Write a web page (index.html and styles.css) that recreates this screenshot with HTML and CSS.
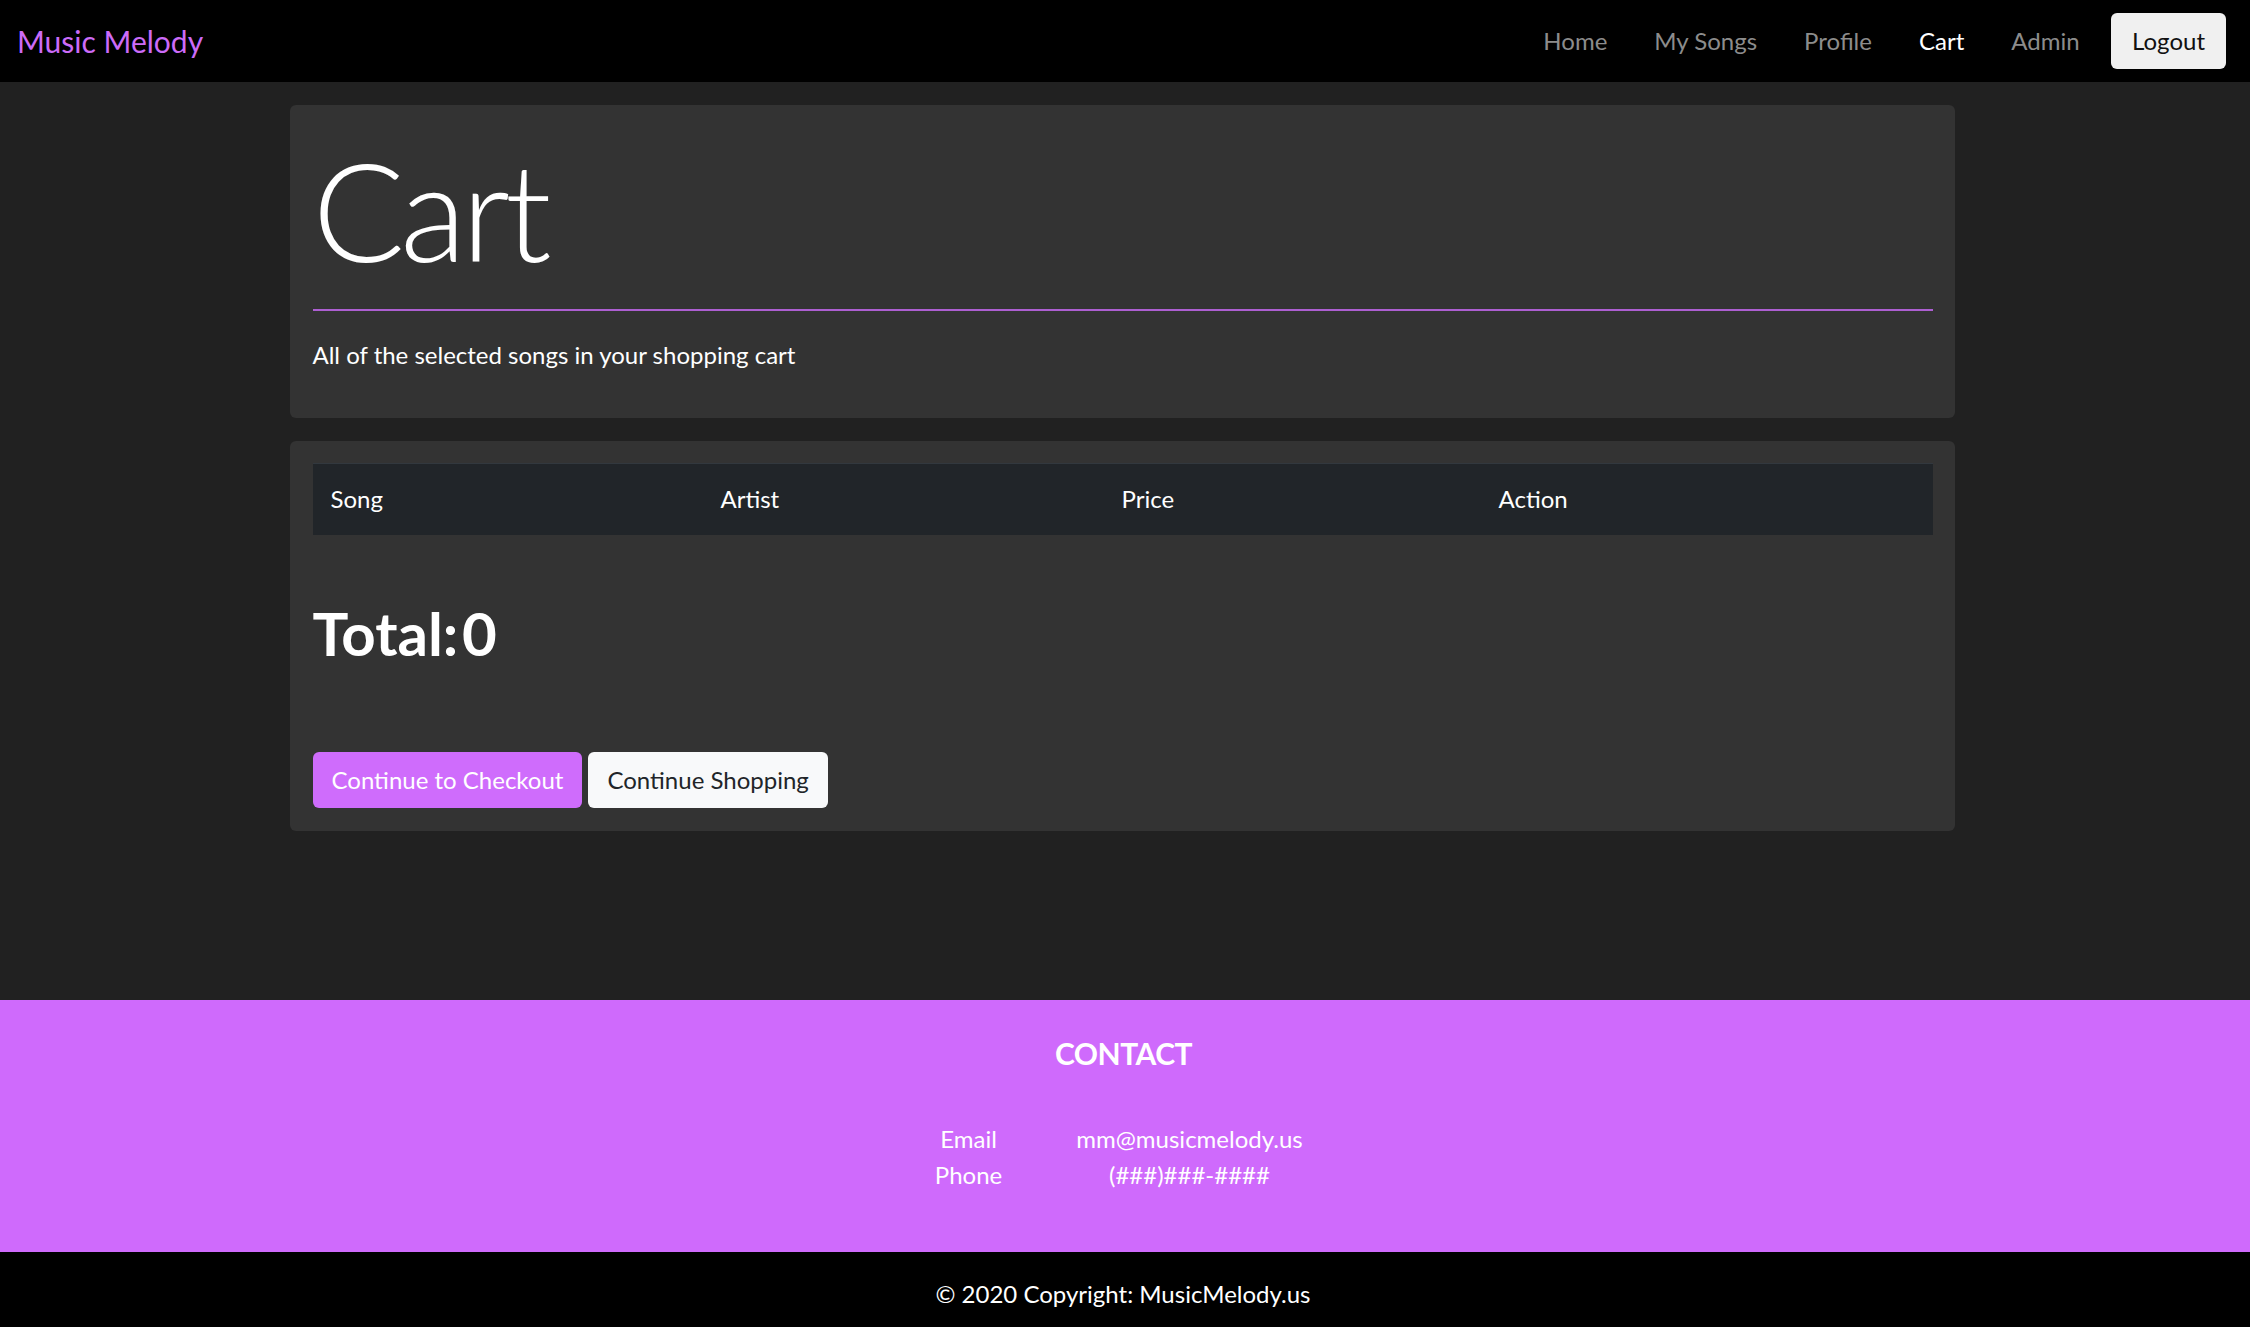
FILE: index.html
```html
<!DOCTYPE html>
<html lang="en">
<head>
<meta charset="utf-8">
<title>Cart - Music Melody</title>
<link rel="stylesheet" href="styles.css">
</head>
<body>
<nav class="navbar">
  <a class="brand" href="#">Music Melody</a>
  <ul class="nav">
    <li><a class="nav-link" href="#">Home</a></li>
    <li><a class="nav-link" href="#">My Songs</a></li>
    <li><a class="nav-link" href="#">Profile</a></li>
    <li><a class="nav-link active" href="#">Cart</a></li>
    <li><a class="nav-link" href="#">Admin</a></li>
  </ul>
  <button class="btn btn-logout">Logout</button>
</nav>

<main class="container">
  <section class="card jumbo">
    <h1 class="display">Cart</h1>
    <hr class="divider">
    <p class="subtitle">All of the selected songs in your shopping cart</p>
  </section>

  <section class="card cart">
    <table class="cart-table">
      <colgroup>
        <col class="c-song">
        <col class="c-artist">
        <col class="c-price">
        <col class="c-action">
      </colgroup>
      <thead>
        <tr><th>Song</th><th>Artist</th><th>Price</th><th>Action</th></tr>
      </thead>
      <tbody></tbody>
    </table>
    <h1 class="total">Total:&#8202;0</h1>
    <div class="actions">
      <button class="btn btn-purple">Continue to Checkout</button>
      <button class="btn btn-light">Continue Shopping</button>
    </div>
  </section>
</main>

<footer class="footer">
  <div class="contact">
    <h5 class="contact-title">CONTACT</h5>
    <div class="contact-grid">
      <span>Email</span><span>mm@musicmelody.us</span>
      <span>Phone</span><span>(###)###-####</span>
    </div>
  </div>
  <div class="copyright">© 2020 Copyright: MusicMelody.us</div>
</footer>
</body>
</html>
```

FILE: styles.css
```css
* { box-sizing: border-box; }

html, body { height: 100%; }

body {
  margin: 0;
  min-height: 100vh;
  display: flex;
  flex-direction: column;
  background: #212121;
  color: #ffffff;
  font-family: "Lato", "Open Sans", sans-serif;
  font-size: 24px;
  line-height: 1.5;
}

a { text-decoration: none; }

/* Navbar */
.navbar {
  height: 82px;
  flex: 0 0 82px;
  background: #000;
  display: flex;
  align-items: center;
  padding: 0 24px 0 17px;
}

.brand {
  color: #cc6bf8;
  font-size: 30px;
  line-height: 45px;
}

.nav {
  list-style: none;
  margin: 0 0 0 auto;
  padding: 0;
  display: flex;
  align-items: center;
}

.nav-link {
  display: block;
  padding: 0 23.5px;
  color: #8c8c8c;
  font-size: 24px;
  line-height: 36px;
}

.nav-link.active { color: #ffffff; }

.btn {
  font-family: inherit;
  font-size: 24px;
  line-height: 36px;
  padding: 9px 18px;
  border: 1.5px solid transparent;
  border-radius: 6px;
  cursor: pointer;
}

.btn-logout {
  margin-left: 8px;
  padding: 9px 20px;
  background: #f0f0f0;
  color: #111;
}

/* Main */
.container {
  flex: 1 0 auto;
  width: 1665px;
  margin: 0 0 0 calc(50% - 835px);
  padding-top: 23px;
}

.card {
  background: #333333;
  border-radius: 6px;
  padding: 22.5px;
}

.jumbo { padding-bottom: 22px; }

.display {
  margin: -4px 0 0;
  font-size: 137px;
  font-weight: 300;
  line-height: 170px;
  letter-spacing: -5px;
  color: #fff;
}

.divider {
  margin: 15px 0 0;
  border: 0;
  height: 2px;
  background: #ad5fd2;
}

.subtitle {
  margin: 26px 0 0;
  line-height: 36px;
  padding-bottom: 23px;
}

.cart {
  margin-top: 23px;
  padding-bottom: 23px;
}

.cart-table {
  width: 100%;
  border-collapse: collapse;
  table-layout: fixed;
}

.c-song { width: 390px; }
.c-artist { width: 401px; }
.c-price { width: 377px; }
.c-action { width: auto; }

.cart-table th {
  background: #212529;
  border-top: 1.5px solid #32383e;
  text-align: left;
  font-weight: 400;
  padding: 16.5px 18px 18px;
  line-height: 36px;
  color: #fff;
}

.total {
  margin: 62px 0 0;
  font-size: 60px;
  font-weight: 700;
  line-height: 72px;
  color: #fff;
}

.actions {
  margin-top: 83px;
  display: flex;
  gap: 6px;
}

.btn-purple {
  background: #cf6cfc;
  color: #fff;
}

.btn-light {
  background: #f8f9fa;
  color: #212529;
}

/* Footer */
.footer { flex: 0 0 auto; }

.contact {
  background: #cf6afc;
  height: 252px;
  padding: 35px 3px 0 0;
  text-align: center;
}

.contact-title {
  margin: 0 0 50px;
  font-size: 30px;
  font-weight: 700;
  line-height: 36px;
  letter-spacing: -0.5px;
}

.contact-grid {
  display: grid;
  grid-template-columns: 132px 310px;
  justify-content: center;
  line-height: 36px;
}

.copyright {
  background: #000;
  height: 75px;
  padding: 24px 4px 0 0;
  line-height: 36px;
  text-align: center;
}
```
